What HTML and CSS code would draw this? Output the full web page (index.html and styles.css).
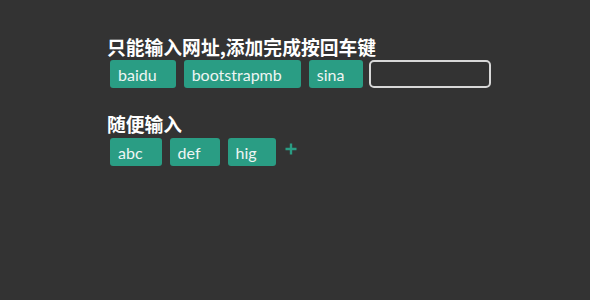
FILE: index.html
```html
<!DOCTYPE html>
<html lang="zh">
<head>
<meta charset="utf-8">
<link rel="stylesheet" href="styles.css">
</head>
<body>
<div class="wrap">
  <section class="group">
    <h2 class="title">只能输入网址,添加完成按回车键</h2>
    <div class="tags">
      <span class="tag">baidu</span>
      <span class="tag">bootstrapmb</span>
      <span class="tag">sina</span>
      <input class="tag-input" type="text">
    </div>
  </section>
  <section class="group second">
    <h2 class="title">随便输入</h2>
    <div class="tags">
      <span class="tag">abc</span>
      <span class="tag">def</span>
      <span class="tag">hig</span>
      <span class="add">
        <svg width="12" height="12" viewBox="0 0 12 12"><path d="M6 0.5V11.5M0.5 6H11.5" stroke="#2a9d84" stroke-width="2.4" fill="none"/></svg>
      </span>
    </div>
  </section>
</div>
</body>
</html>
```
FILE: styles.css
```css
html, body {
  margin: 0;
  background: #333333;
  height: 100%;
}
.wrap {
  padding: 35px 0 0 107px;
  font-family: Lato, "Noto Sans CJK SC", sans-serif;
}
.group.second {
  margin-top: 24px;
}
.title {
  margin: 0;
  color: #ffffff;
  font-family: "Noto Sans CJK SC", sans-serif;
  font-weight: 700;
  font-size: 18.8px;
  line-height: 24px;
}
.tags {
  display: flex;
  align-items: center;
  gap: 8px;
  padding-left: 3px;
  margin-top: 1px;
}
.second .tags {
  margin-top: 2px;
}
.tag {
  display: inline-flex;
  align-items: center;
  box-sizing: border-box;
  height: 28px;
  padding: 0 19px 0 8px;
  background: #2a9d84;
  color: #eef5f3;
  border-radius: 3px;
  font-size: 16px;
}
.tag-input {
  box-sizing: border-box;
  width: 122px;
  height: 28px;
  margin-left: -2px;
  border: 2px solid #d8d8d8;
  border-radius: 5px;
  background: transparent;
  outline: none;
}
.add {
  display: inline-flex;
  margin-left: 1px;
  margin-top: -6px;
}
```
